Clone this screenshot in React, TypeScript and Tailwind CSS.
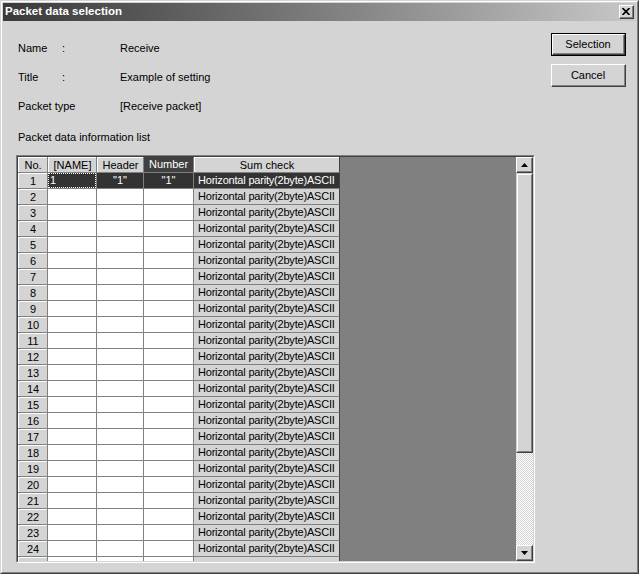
import React from "react";

const font = { fontFamily: '"Liberation Sans", Arial, sans-serif' };

const rows = Array.from({ length: 24 }, (_, i) => i + 1);

function Tri({ down }: { down?: boolean }) {
  return (
    <svg width="7" height="4" viewBox="0 0 7 4" className="block">
      <polygon points={down ? "0,0 7,0 3.5,4" : "0,4 7,4 3.5,0"} fill="#000" />
    </svg>
  );
}

function ScrollButton({ down }: { down?: boolean }) {
  return (
    <div className="h-[16px] w-[17px] border border-t-white border-l-white border-r-[#404040] border-b-[#404040] bg-[#d4d4d4]">
      <div className="h-full w-full border-r border-b border-[#808080] flex items-center justify-center">
        <Tri down={down} />
      </div>
    </div>
  );
}

function HeaderCell({ w, label, active }: { w: string; label: string; active?: boolean }) {
  return (
    <div
      className={`${w} h-[16px] shrink-0 border-r border-b border-r-[#808080] border-b-[#808080] flex items-center justify-center text-[11px] leading-none ${
        active ? "bg-[#404040] text-white" : "bg-[#d4d4d4] text-black"
      }`}
    >
      <div className={`w-full h-full flex items-center justify-center ${active ? "" : "border-t border-l border-white"}`}>
        {label}
      </div>
    </div>
  );
}

function Row({ n, empty }: { n: number; empty?: boolean }) {
  const sel = n === 1;
  const cell = "h-[16px] shrink-0 border-r border-b border-[#808080] flex items-center text-[11px] leading-none";
  return (
    <div className="flex">
      <div className={`${cell} w-[30px] bg-[#d4d4d4] justify-center`}>
        <div className="w-full h-full border-t border-l border-white flex items-center justify-center">{empty ? "" : n}</div>
      </div>
      <div className={`${cell} w-[49px] ${sel ? "bg-[#333333] text-white" : "bg-white"}`}>
        {sel && (
          <div className="w-full h-full border border-dotted border-white flex items-center pl-[1px]">1</div>
        )}
      </div>
      <div className={`${cell} w-[47px] justify-center ${sel ? "bg-[#333333] text-white" : "bg-white"}`}>
        {sel ? '"1"' : ""}
      </div>
      <div className={`${cell} w-[50px] justify-center ${sel ? "bg-[#333333] text-white" : "bg-white"}`}>
        {sel ? '"1"' : ""}
      </div>
      <div
        className={`${cell} w-[146px] border-r-[#404040] pl-[4px] whitespace-nowrap overflow-hidden tracking-[-0.2px] ${
          sel ? "bg-[#333333] text-white" : "bg-[#d4d4d4] text-black"
        }`}
      >
        {empty ? "" : "Horizontal parity(2byte)ASCII"}
      </div>
    </div>
  );
}

function Button({ label, def }: { label: string; def?: boolean }) {
  return (
    <div className={`h-[23px] w-[75px] ${def ? "border border-black" : ""}`}>
      <div className="h-full w-full border border-t-white border-l-white border-r-[#404040] border-b-[#404040] bg-[#d4d4d4]">
        <div className="h-full w-full border-r border-b border-[#808080] flex items-center justify-center text-[11px] text-black">
          {label}
        </div>
      </div>
    </div>
  );
}

export default function App() {
  return (
    <div style={font} className="w-[639px] h-[574px] bg-[#d4d4d4] border border-t-[#d4d4d4] border-l-[#d4d4d4] border-r-[#404040] border-b-[#404040]">
      <div className="h-full w-full border border-t-white border-l-white border-r-[#808080] border-b-[#808080] p-[1px] flex flex-col">
        {/* title bar */}
        <div className="h-[18px] shrink-0 bg-gradient-to-r from-[#3a3a3a] to-[#c8c8c8] flex items-center justify-between pl-[2px] pr-[2px]">
          <span className="text-white font-bold text-[11.5px] leading-none">Packet data selection</span>
          <div className="h-[14px] w-[15px] border border-t-white border-l-white border-r-[#404040] border-b-[#404040] bg-[#d4d4d4]">
            <div className="h-full w-full border-r border-b border-[#808080] flex items-center justify-center">
              <svg width="8" height="7" viewBox="0 0 8 7">
                <path d="M0.5 0 L7.5 7 M7.5 0 L0.5 7" stroke="#000" strokeWidth="1.6" />
              </svg>
            </div>
          </div>
        </div>

        {/* body */}
        <div className="flex pl-[13px] gap-[16px]">
          <div className="flex flex-col w-[519px] pt-[21px] text-[11px] leading-[13px] text-black">
            <div className="flex pl-[2px]">
              <span className="w-[44px]">Name</span>
              <span className="w-[58px]">:</span>
              <span>Receive</span>
            </div>
            <div className="flex pl-[2px] mt-[16px]">
              <span className="w-[44px]">Title</span>
              <span className="w-[58px]">:</span>
              <span>Example of setting</span>
            </div>
            <div className="flex pl-[2px] mt-[16px]">
              <span className="w-[102px]">Packet type</span>
              <span>[Receive packet]</span>
            </div>
            <div className="pl-[2px] mt-[18px]">Packet data information list</div>

            {/* table */}
            <div className="mt-[11px] h-[408px] border border-t-[#808080] border-l-[#808080] border-r-white border-b-white">
              <div className="h-full w-full border border-t-[#404040] border-l-[#404040] border-r-[#d4d4d4] border-b-[#d4d4d4] flex overflow-hidden">
                <div className="flex flex-col bg-white h-full overflow-hidden">
                  <div className="flex">
                    <HeaderCell w="w-[30px]" label="No." />
                    <HeaderCell w="w-[49px]" label="[NAME]" />
                    <HeaderCell w="w-[47px]" label="Header" />
                    <HeaderCell w="w-[50px]" label="Number" active />
                    <div className="w-[146px] h-[16px] shrink-0 border-r border-b border-r-[#404040] border-b-[#808080] bg-[#d4d4d4] text-[11px] leading-none">
                      <div className="w-full h-full border-t border-l border-white flex items-center justify-center">Sum check</div>
                    </div>
                  </div>
                  {rows.map((n) => (
                    <Row key={n} n={n} />
                  ))}
                  <Row n={25} empty />
                </div>
                <div className="flex-1 bg-[#808080]" />
                <div className="w-[17px] flex flex-col">
                  <ScrollButton />
                  <div className="h-[280px] border border-t-[#d4d4d4] border-l-[#d4d4d4] border-r-[#404040] border-b-[#404040] bg-[#d4d4d4]">
                    <div className="h-full w-full border border-t-white border-l-white border-r-[#808080] border-b-[#808080]" />
                  </div>
                  <div className="flex-1 bg-[repeating-conic-gradient(#d4d4d4_0_25%,#ffffff_0_50%)] bg-[length:2px_2px]" />
                  <ScrollButton down />
                </div>
              </div>
            </div>
          </div>

          <div className="flex flex-col pt-[12px] gap-[8px]">
            <Button label="Selection" def />
            <Button label="Cancel" />
          </div>
        </div>
      </div>
    </div>
  );
}
